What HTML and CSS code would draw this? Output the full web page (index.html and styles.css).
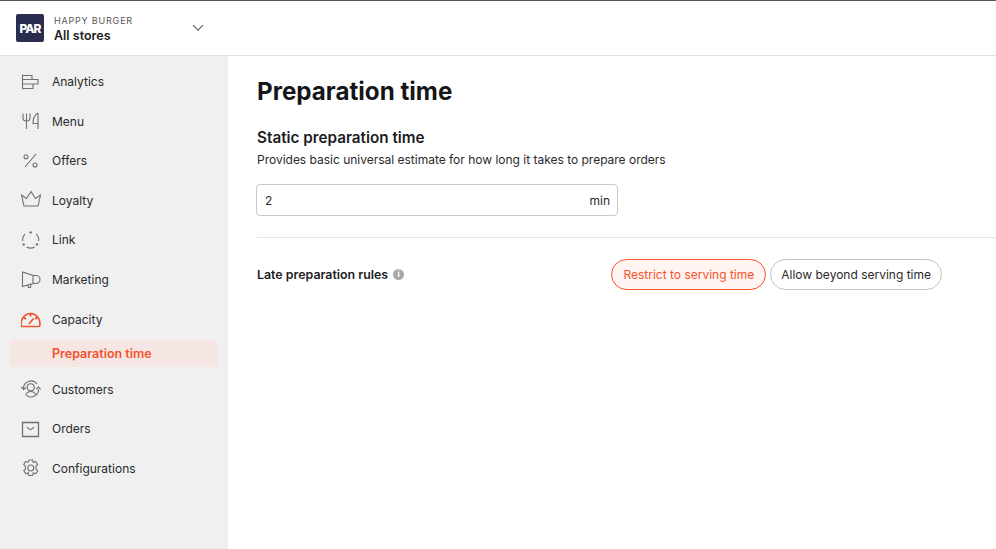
FILE: index.html
```html
<!DOCTYPE html>
<html lang="en">
<head>
<meta charset="utf-8">
<title>Preparation time</title>
<link rel="stylesheet" href="styles.css">
</head>
<body>
<div class="app">
  <header class="topbar">
    <div class="brand">
      <div class="logo">PAR</div>
      <div class="brand-text">
        <div class="brand-name">HAPPY BURGER</div>
        <div class="brand-store">All stores</div>
      </div>
      <svg class="chev" width="12" height="8" viewBox="0 0 12 8"><path d="M1 1.200 6 6.200 11 1.200" fill="none" stroke="#666" stroke-width="1.200"/></svg>
    </div>
  </header>
  <div class="body">
    <nav class="sidebar">
      <a class="item"><svg class="ic" viewBox="0 0 20 20"><path d="M1.500 2.500v15M1.500 3.500h9.500v4H1.500M1.500 7.500h15.500v4.500H1.500M1.500 12h10.500v4.500H1.500"/></svg><span>Analytics</span></a>
      <a class="item"><svg class="ic" viewBox="0 0 20 20"><path d="M2 2.500v4.500c0 2 1.500 3 3.500 3S9 9 9 7V2.500M5.500 2.500V18M17 2c-3 1.500-5 5-5 10.500h5M17 2v16"/></svg><span>Menu</span></a>
      <a class="item"><svg class="ic" viewBox="0 0 20 20"><circle cx="5" cy="5.800" r="2"/><circle cx="14" cy="14" r="2"/><path d="M15 3 4 16"/></svg><span>Offers</span></a>
      <a class="item"><svg class="ic" viewBox="0 0 20 20"><path d="M0.500 5 5.500 8.500 10 1.500l4.500 7L19.500 5 17 16H3Z"/></svg><span>Loyalty</span></a>
      <a class="item"><svg class="ic" viewBox="0 0 20 20"><path d="M4.200 4.200A8 8 0 0 0 1.700 11M15.200 4.200A8 8 0 0 1 17.700 11M5.700 17a8 8 0 0 0 8 0"/><circle class="dot" cx="9.700" cy="2.400" r="1.200"/><circle class="dot" cx="2.700" cy="14.400" r="1.200"/><circle class="dot" cx="16" cy="14.400" r="1.200"/></svg><span>Link</span></a>
      <a class="item"><svg class="ic" viewBox="0 0 20 20"><path d="M1.500 2v14.500L12 13.500V5.500ZM12 5.500h3a4 4 0 0 1 0 8H12M6.500 15l1 2.500h2l.5-3.500"/></svg><span>Marketing</span></a>
      <a class="item"><svg class="ic hot" viewBox="0 0 20 20"><path d="M1.500 17.500h16c1 0 1.500-.5 1.500-2.500a9.500 10.500 0 0 0-19 0c0 2 .5 2.500 1.500 2.500ZM9.500 4.500v3M3 8.500l2 1.500M16 8.500l-2 1.500M8 15l4.500-5.500"/></svg><span>Capacity</span></a>
      <a class="subitem">Preparation time</a>
      <a class="item after"><svg class="ic" viewBox="0 0 20 20"><circle cx="9.700" cy="8.200" r="3.500"/><path d="M4.800 16c1-2.800 3-3.500 4.900-3.500s4.200.7 5.200 3.500M2.500 10a7.500 7.500 0 0 1 13.500-5M17.500 10a7.500 7.500 0 0 1-13 5.500M0 8l2.500 2.500L5 8.500M15 10l2.500-2 2.200 2.500"/></svg><span>Customers</span></a>
      <a class="item"><svg class="ic bold" viewBox="0 0 20 20"><path d="M1.500 3.500h16v14h-16Z"/><path d="M6 8c1 1.500 2.200 2.500 3.500 2.500S12 9.500 13 8"/></svg><span>Orders</span></a>
      <a class="item"><svg class="ic" viewBox="0 0 20 20"><circle cx="9.800" cy="10" r="3"/><path d="M8 2h3.600l.7 2.400 2.300-.9 2 3-1.700 1.800.1 2.800 1.700 1.700-2 3-2.400-1-.7 2.700H7.900l-.7-2.700-2.400 1-2-3 1.700-1.800-.1-2.700-1.700-1.800 2-3 2.300.9Z"/></svg><span>Configurations</span></a>
    </nav>
    <main class="main">
      <h1 class="title">Preparation time</h1>
      <h2 class="subtitle">Static preparation time</h2>
      <p class="desc">Provides basic universal estimate for how long it takes to prepare orders</p>
      <div class="field"><span>2</span><span>min</span></div>
      <hr class="rule">
      <div class="rules">
        <div class="rules-label"><span>Late preparation rules</span><span class="info">i</span></div>
        <div class="pills">
          <span class="pill on">Restrict to serving time</span>
          <span class="pill">Allow beyond serving time</span>
        </div>
      </div>
    </main>
  </div>
</div>
</body>
</html>
```
FILE: styles.css
```css
* { box-sizing: border-box; }
html, body { margin: 0; height: 100%; overflow: hidden; }
body { font-family: Inter, "Liberation Sans", sans-serif; color: #1d1d1f; background: #fff; }
.app { height: 549px; display: flex; flex-direction: column; border-top: 1px solid #555; }
.topbar { height: 55px; flex: none; border-bottom: 1px solid #e0e0e0; background: #fff; display: flex; align-items: center; }
.brand { width: 228px; display: flex; align-items: center; padding-left: 16px; padding-right: 24px; }
.logo { width: 28px; height: 28px; border-radius: 2px; background: #2b2d50; color: #fff; font-size: 12px; font-weight: 800; letter-spacing: -1px; display: flex; align-items: center; justify-content: center; }
.brand-text { margin-left: 10px; flex: 1; padding-top: 2px; }
.brand-name { font-size: 9px; line-height: 12px; letter-spacing: .8px; color: #555; }
.brand-store { font-size: 12.500px; line-height: 17px; font-weight: 600; color: #1d1d1f; }
.chev { display: block; }
.body { flex: 1; display: flex; min-height: 0; }
.sidebar { width: 228px; flex: none; background: #f0f0f0; padding-top: 6px; display: flex; flex-direction: column; }
.item { height: 39.55px; display: flex; align-items: center; padding-left: 21px; font-size: 12px; color: #2a2a2c; }
.item span { margin-left: 11px; }
.ic { width: 20px; height: 20px; flex: none; fill: none; stroke: #707070; stroke-width: 1.100; }
.ic .dot { fill: #707070; stroke: none; }
.ic.bold { stroke-width: 1.300; }
.ic.hot { stroke: #f4512c; stroke-width: 1.600; }
.subitem { height: 27px; margin: 1.15px 10px 0 9px; padding-left: 43px; display: flex; align-items: center; background: #f5e6e3; border-radius: 4px; color: #f4512c; font-size: 12.500px; font-weight: 600; }
.item.after { margin-top: 2.6px; }
.main { flex: 1; padding: 0 0 0 29px; min-width: 0; }
.title { margin: 21px 0 0; font-size: 24.200px; line-height: 29px; font-weight: 700; color: #161618; }
.subtitle { margin: 22px 0 0; font-size: 15.250px; line-height: 20px; font-weight: 600; color: #1d1d1f; }
.desc { margin: 3px 0 0; font-size: 12px; line-height: 18px; color: #2a2a2c; letter-spacing: -.01px; }
.field { width: 362px; height: 32px; margin: 15px 0 0 -1px; border: 1px solid #c9c9c9; border-radius: 4px; padding: 0 7px 0 8px; display: flex; justify-content: space-between; align-items: center; font-size: 12px; color: #2a2a2c; }
.rule { border: 0; border-top: 1px solid #e3e3e3; margin: 21px 0 0; }
.rules { display: flex; justify-content: space-between; align-items: center; margin-top: 21px; padding-right: 54px; }
.rules-label { display: flex; align-items: center; gap: 5px; font-size: 12.400px; font-weight: 600; color: #1d1d1f; }
.info { width: 11px; height: 11px; border-radius: 50%; background: #a8a8a8; color: #fff; font-size: 8px; font-weight: 700; line-height: 11px; text-align: center; }
.pills { display: flex; gap: 4px; }
.pill { height: 31px; padding: 0 10px; border: 1px solid #c4c4c4; border-radius: 16px; display: flex; align-items: center; font-size: 12px; color: #2a2a2c; }
.pill.on { padding: 0 11px; border-color: #f4512c; background: #fff5f2; color: #f4512c; }
```
